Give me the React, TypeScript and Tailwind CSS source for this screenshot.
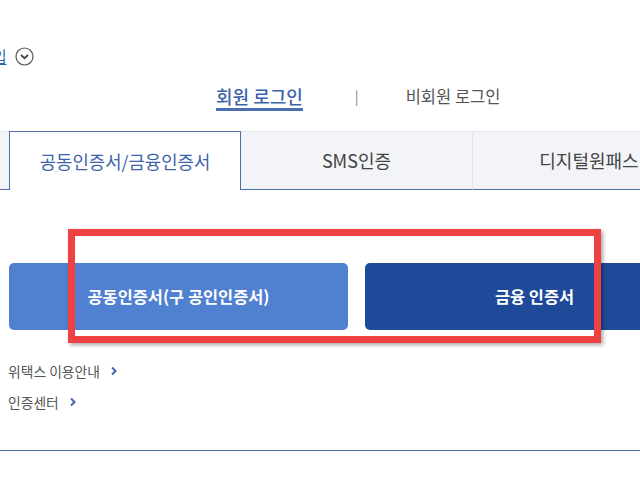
import React from "react";

const font = { fontFamily: '"Noto Sans CJK KR", "Noto Sans", sans-serif' };

function Chevron() {
  return (
    <svg width="8" height="10" viewBox="0 0 8 10" className="ml-[10px]">
      <path d="M2 1.5 L5.5 5 L2 8.5" fill="none" stroke="#3f67ad" strokeWidth="2" />
    </svg>
  );
}

export default function App() {
  return (
    <div
      className="relative w-[640px] h-[480px] overflow-hidden bg-white"
      style={font}
    >
      {/* header row */}
      <div className="mt-[46px] h-[20px] flex items-center">
        <span className="-ml-[21px] text-[15px] leading-[20px] text-[#2f5fb5] underline underline-offset-2 whitespace-nowrap">
          가입
        </span>
        <svg width="19" height="19" viewBox="0 0 19 19" className="ml-[8px] shrink-0">
          <circle cx="9.5" cy="9.5" r="8.5" fill="none" stroke="#555" strokeWidth="1.2" />
          <path d="M6 8 L9.5 11.2 L13 8" fill="none" stroke="#444" strokeWidth="1.8" />
        </svg>
      </div>

      {/* login type row */}
      <div className="mt-[20px] h-[25px] flex items-start pl-[216px]">
        <span className="text-[18px] leading-[21px] font-medium text-[#3d64aa] border-b-[3px] border-[#4a6fb0] pb-[1px]">
          회원 로그인
        </span>
        <span className="ml-[52px] text-[14px] leading-[21px] text-[#888]">|</span>
        <span className="ml-[47px] text-[16.5px] leading-[21px] text-[#555]">
          비회원 로그인
        </span>
      </div>

      {/* tabs */}
      <div className="mt-[20px] h-[59px] flex">
        <div className="w-[9px] shrink-0 bg-[#f3f4f7] border-t border-t-[#e3e5ea] border-b border-b-[#4d6fa8]" />
        <div className="w-[232px] shrink-0 bg-white border border-[#4d6fa8] border-b-0 flex items-center justify-center text-[17.8px] text-[#3b64aa]">
          공동인증서/금융인증서
        </div>
        <div className="w-[232px] shrink-0 bg-[#f3f4f7] border-t border-t-[#e3e5ea] border-b border-b-[#4d6fa8] border-r border-r-[#e3e5ea] flex items-center justify-center text-[18px] text-[#444]">
          SMS인증
        </div>
        <div className="w-[232px] shrink-0 bg-[#f3f4f7] border-t border-t-[#e3e5ea] border-b border-b-[#4d6fa8] flex items-center justify-center text-[18px] text-[#444]">
          디지털원패스
        </div>
      </div>

      {/* buttons */}
      <div className="mt-[73px] flex gap-[17px] pl-[9px]">
        <div className="w-[339px] h-[67px] shrink-0 rounded-[5px] bg-[#5080d0] flex items-center justify-center text-white text-[16.4px] font-bold">
          공동인증서(구 공인인증서)
        </div>
        <div className="w-[339px] h-[67px] shrink-0 rounded-[5px] bg-[#1f4a9a] flex items-center justify-center text-white text-[16.4px] font-bold">
          금융 인증서
        </div>
      </div>

      {/* links */}
      <div className="mt-[31px] h-[20px] flex items-center pl-[8px] text-[13.8px] text-[#555]">
        위택스 이용안내
        <Chevron />
      </div>
      <div className="mt-[11px] h-[20px] flex items-center pl-[8px] text-[13.8px] text-[#555]">
        인증센터
        <Chevron />
      </div>

      <div className="mt-[38px] border-t border-[#4d6fa8]" />

      {/* red highlight box */}
      <div className="absolute left-[68px] top-[229px] w-[533px] h-[114px] border-[7px] border-[#ee4242] shadow-[2px_2px_4px_rgba(0,0,0,0.35)]" />
    </div>
  );
}
